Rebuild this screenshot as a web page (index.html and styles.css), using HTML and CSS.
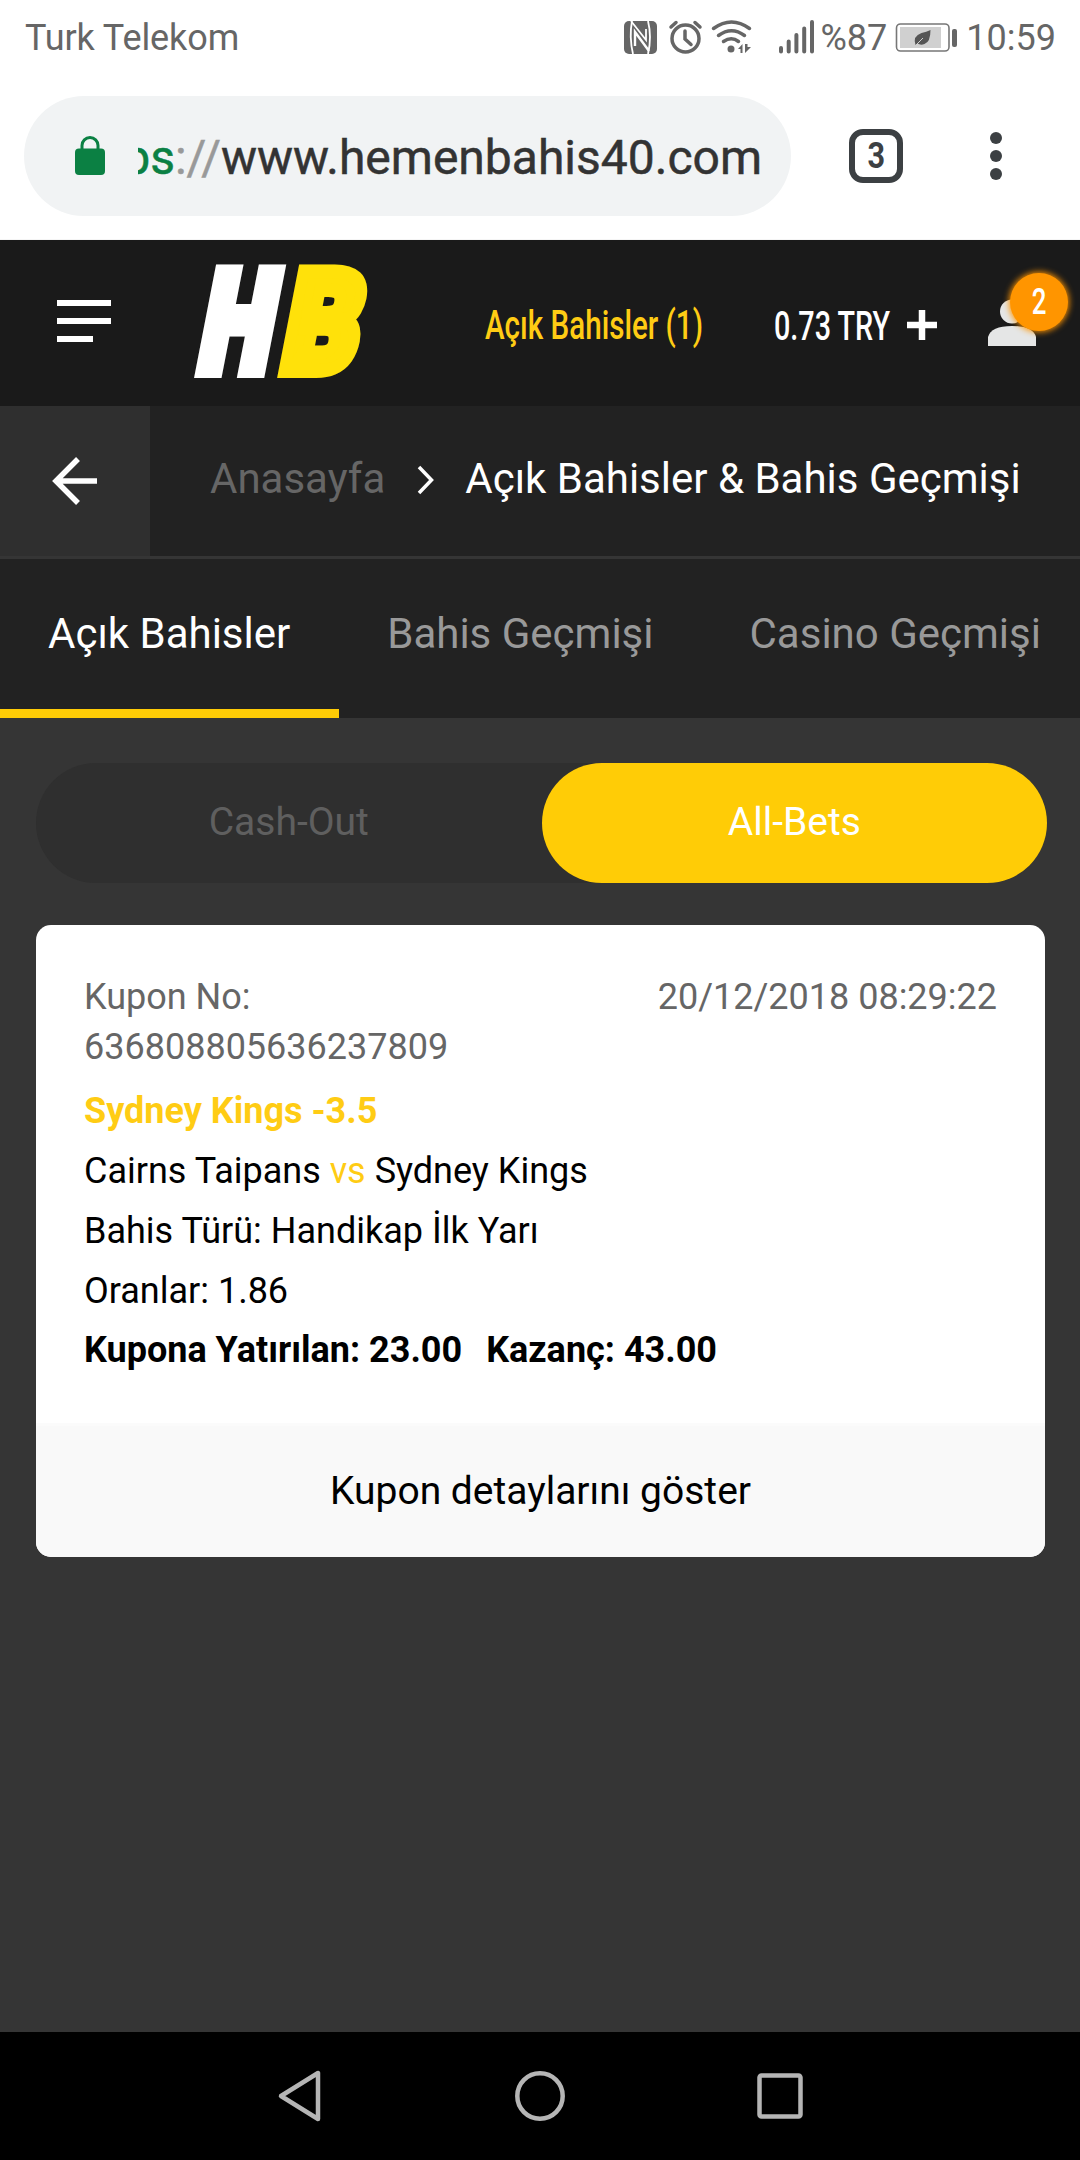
FILE: index.html
```html
<!DOCTYPE html>
<html lang="tr">
<head>
  <meta charset="UTF-8">
  <meta name="viewport" content="width=device-width, initial-scale=1.0">
  <title>Açık Bahisler &amp; Bahis Geçmişi</title>
  <link rel="stylesheet" href="styles.css">
</head>
<body>
  <div class="status-bar">
    <span class="carrier">Turk Telekom</span>
    <svg class="status-icons" width="194" height="40" viewBox="622 17 194 40">
      <!-- nfc -->
      <rect x="624" y="20" width="33" height="33" rx="5" fill="#666"/>
      <path d="M632 20q-3 16 1 33M648 20q4 16 0 33" fill="none" stroke="#fff" stroke-width="1.800"/>
      <path d="M631 20l15 19V28" fill="none" stroke="#fff" stroke-width="1.800"/>
      <path d="M635 45V31l14 19" fill="none" stroke="#fff" stroke-width="2.400"/>
      <!-- alarm -->
      <circle cx="685.500" cy="37.500" r="13.500" fill="none" stroke="#666" stroke-width="3.500"/>
      <path d="M685 30v8l6 5.500M671 26l5-4.500M700 26l-5-4.500" fill="none" stroke="#666" stroke-width="3.500" stroke-linecap="round"/>
      <!-- wifi -->
      <path d="M713.500 27.500q18-13 36 0M718.500 34.500q13-9.500 26 0M723.500 40.500q8-5.500 15 0" fill="none" stroke="#666" stroke-width="3.500" stroke-linecap="round"/>
      <circle cx="731" cy="48" r="3.500" fill="#666"/>
      <path d="M738 48l4.500-5v9h-2v-4zM745 43v9l6-6h-3.500v-3z" fill="#666"/>
      <!-- signal -->
      <path d="M781 47v3.500M788.700 40.500v10M796.400 34v16.500M804.200 27.500v23M812 21v29.500" stroke="#666" stroke-width="4" stroke-linecap="round"/>
    </svg>
    <span class="percent">%87</span>
    <svg class="battery" width="62" height="30" viewBox="896 22 62 30">
      <rect x="896.500" y="23" width="52.500" height="27" rx="4" fill="none" stroke="#777" stroke-width="1.600"/>
      <rect x="900" y="26" width="41" height="21" fill="#d0d0d0"/>
      <path d="M915.500 44q-3-9 6-12 5-1 9-3 0 12-6 14-4 1.500-7-.5z" fill="#555"/>
      <path d="M916 44l7-7" stroke="#d0d0d0" stroke-width="1"/>
      <rect x="952" y="28" width="5" height="18" rx="2" fill="#666"/>
    </svg>
    <span class="clock">10:59</span>
  </div>

  <div class="browser-bar">
    <div class="address">
      <svg class="lock" width="30" height="40" viewBox="0 0 30 40">
        <path d="M7 15V9.500a8 8 0 0 1 16 0V15" fill="none" stroke="#0b8043" stroke-width="3"/>
        <rect y="12.500" width="30" height="26.500" rx="4" fill="#0b8043"/>
      </svg>
      <div class="url"><span class="scheme">https</span><span class="slashes">://</span>www.hemenbahis40.com</div>
    </div>
    <div class="tab-count"><span>3</span></div>
    <div class="more"><i></i><i></i><i></i></div>
  </div>

  <header class="site-header">
    <div class="menu"><i></i><i></i><i></i></div>
    <svg class="logo" width="178" height="114" viewBox="0 0 178 114">
      <g font-family="Roboto" font-weight="900" font-size="140" stroke-width="14">
        <text transform="translate(2 107) skewX(-11)" textLength="71" lengthAdjust="spacingAndGlyphs" fill="#fff" stroke="#fff">H</text>
        <text transform="translate(85 107) skewX(-11)" textLength="75" lengthAdjust="spacingAndGlyphs" fill="#ffe10a" stroke="#ffe10a">B</text>
      </g>
    </svg>
    <svg class="open-bets" width="218" height="50" viewBox="0 0 218 50">
      <text x="0" y="39" textLength="218" lengthAdjust="spacingAndGlyphs">Açık Bahisler (1)</text>
    </svg>
    <svg class="balance" width="116" height="50" viewBox="0 0 116 50">
      <text x="0" y="40" textLength="116" lengthAdjust="spacingAndGlyphs">0.73 TRY</text>
    </svg>
    <svg class="plus" width="30" height="30" viewBox="0 0 30 30">
      <path d="M0 15h30M15 0v30" stroke="#fff" stroke-width="6.500"/>
    </svg>
    <div class="user">
      <svg width="48" height="48" viewBox="0 0 48 48">
        <circle cx="24" cy="12.500" r="12" fill="#e5e6e6"/>
        <path d="M0 47V38q3-11 24-11t24 11v9z" fill="#e5e6e6"/>
      </svg>
      <span class="badge"><span>2</span></span>
    </div>
  </header>

  <div class="breadcrumb">
    <div class="back">
      <svg width="46" height="50" viewBox="0 0 46 50">
        <path d="M26 3L4 25l22 22M4 25h41" fill="none" stroke="#fff" stroke-width="5.500"/>
      </svg>
    </div>
    <a class="crumb">Anasayfa</a>
    <svg class="chevron" width="18" height="30" viewBox="0 0 18 30">
      <path d="M2 2l12.500 13L2 28" fill="none" stroke="#fff" stroke-width="3.500"/>
    </svg>
    <span class="crumb-current">Açık Bahisler &amp; Bahis Geçmişi</span>
  </div>

  <nav class="tabs">
    <a class="tab active">Açık Bahisler</a>
    <a class="tab">Bahis Geçmişi</a>
    <a class="tab">Casino Geçmişi</a>
  </nav>

  <main class="content">
    <div class="switch">
      <div class="switch-item">Cash-Out</div>
      <div class="switch-item active">All-Bets</div>
    </div>

    <div class="coupon">
      <div class="coupon-body">
        <div class="coupon-head">
          <div class="coupon-no">Kupon No: 636808805636237809</div>
          <div>20/12/2018 08:29:22</div>
        </div>
        <div class="pick">Sydney Kings -3.5</div>
        <div>Cairns Taipans <span class="vs">vs</span> Sydney Kings</div>
        <div>Bahis Türü: Handikap İlk Yarı</div>
        <div>Oranlar: 1.86</div>
        <div class="totals"><span>Kupona Yatırılan: 23.00</span><span>Kazanç: 43.00</span></div>
      </div>
      <div class="coupon-footer">Kupon detaylarını göster</div>
    </div>
  </main>

  <div class="nav-bar">
    <svg width="46" height="54" viewBox="0 0 46 54">
      <path d="M41 4v46L4 27z" fill="none" stroke="#b5b5b5" stroke-width="4.500" stroke-linejoin="round"/>
    </svg>
    <svg width="50" height="50" viewBox="0 0 50 50">
      <circle cx="25" cy="25" r="22.700" fill="none" stroke="#b5b5b5" stroke-width="4.500"/>
    </svg>
    <svg width="46" height="46" viewBox="0 0 46 46">
      <rect x="2.500" y="2.500" width="41" height="41" rx="2" fill="none" stroke="#b5b5b5" stroke-width="4.500"/>
    </svg>
  </div>
</body>
</html>
```
FILE: styles.css
```css
* {
  box-sizing: border-box;
}
body {
  margin: 0;
  width: 1080px;
  height: 2160px;
  display: flex;
  flex-direction: column;
  font-family: Roboto, "Liberation Sans", sans-serif;
  font-size: 36px;
  background-color: #353535;
  overflow: hidden;
}
svg {
  display: block;
  flex: none;
  overflow: visible;
}

/* phone status bar */
.status-bar {
  height: 75px;
  padding: 0 24px 0 25px;
  display: flex;
  align-items: center;
  background-color: #fff;
  color: #666;
}
.carrier {
  letter-spacing: -0.1px;
}
.status-icons {
  margin-left: auto;
}
.percent {
  margin-left: 5px;
}
.battery {
  margin-left: 9px;
}
.clock {
  margin-left: 8px;
}

/* browser toolbar */
.browser-bar {
  height: 165px;
  padding: 21px 24px 24px;
  display: flex;
  align-items: center;
  background-color: #fff;
  border-bottom: 1px solid #f5f5f5;
}
.address {
  width: 767px;
  height: 120px;
  padding-left: 51px;
  display: flex;
  align-items: center;
  border-radius: 60px;
  background-color: #f1f3f4;
}
.url {
  width: 624px;
  margin: 3px 0 0 33px;
  display: flex;
  justify-content: flex-end;
  overflow: hidden;
  font-size: 48px;
  color: #333;
  -webkit-text-stroke: 0.5px currentColor;
  white-space: nowrap;
}
.scheme {
  color: #0b8043;
}
.slashes {
  color: #999;
}
.tab-count {
  width: 54px;
  height: 54px;
  margin-left: 58px;
  display: flex;
  align-items: center;
  justify-content: center;
  border: 6px solid #3c4043;
  border-radius: 14px;
  color: #3c4043;
  font-weight: bold;
}
.tab-count span {
  transform: scaleX(0.85);
}
.more {
  margin-left: 87px;
  display: grid;
  gap: 6px;
}
.more i {
  width: 12px;
  height: 12px;
  border-radius: 50%;
  background-color: #3c4043;
}

/* site header */
.site-header {
  height: 166px;
  padding-left: 57px;
  display: flex;
  align-items: flex-start;
  background-color: #1a1a1a;
}
.menu {
  width: 54px;
  margin-top: 60px;
  display: grid;
  gap: 12px;
}
.menu i {
  height: 6px;
  background-color: #fff;
}
.menu i:last-child {
  width: 36px;
}
.logo {
  margin: 24px 0 0 82px;
}
.open-bets {
  margin: 60px 0 0 114px;
  font-size: 40px;
  font-weight: 500;
  fill: #ffcc14;
}
.balance {
  margin: 60px 0 0 71px;
  font-size: 40px;
  font-weight: 500;
  fill: #fff;
}
.plus {
  margin: 70px 0 0 17px;
}
.user {
  position: relative;
  margin: 59px 0 0 51px;
}
.badge {
  position: absolute;
  left: 22px;
  top: -26px;
  width: 58px;
  height: 58px;
  display: flex;
  align-items: center;
  justify-content: center;
  border-radius: 50%;
  background-color: #ff9500;
  box-shadow: 0 0 6px 1px #ff9500;
  color: #fff;
  font-weight: 500;
}
.badge span {
  transform: scaleX(0.72);
}

/* breadcrumb */
.breadcrumb {
  height: 153px;
  display: flex;
  align-items: center;
  background-color: #222;
  border-bottom: 3px solid #353535;
  font-size: 42px;
  color: #fff;
}
.back {
  width: 150px;
  height: 150px;
  padding: 50px 0 0 52px;
  background-color: #2f2f2f;
}
.crumb {
  margin: 0 32px 5px 60px;
  color: #666;
}
.chevron {
  margin-bottom: 2px;
}
.crumb-current {
  margin: 0 0 5px 30px;
  white-space: nowrap;
}

/* tabs */
.tabs {
  height: 159px;
  display: flex;
  background-color: #222;
  font-size: 42px;
}
.tab {
  padding: 0 48px;
  line-height: 150px;
  color: #999;
  white-space: nowrap;
}
.tab.active {
  padding-right: 49px;
  color: #fff;
  border-bottom: 9px solid #ffcc06;
}

/* content */
.content {
  flex: 1;
  padding: 45px 33px 0 36px;
}
.switch {
  display: flex;
  border-radius: 60px;
  background-color: #2f2f2f;
  font-size: 39px;
}
.switch-item {
  flex: 1;
  height: 120px;
  line-height: 119px;
  text-align: center;
  color: #5f5f5f;
}
.switch-item.active {
  border-radius: 60px;
  background-color: #ffcc06;
  color: #fff;
}
.coupon {
  width: 1009px;
  margin-top: 42px;
  border-radius: 15px;
  background-color: #fff;
  overflow: hidden;
}
.coupon-body {
  height: 498px;
  padding: 47px 48px 0;
  line-height: 60px;
  color: #000;
}
.coupon-head {
  margin-bottom: 9px;
  display: flex;
  justify-content: space-between;
  line-height: 50px;
  color: #666;
}
.coupon-no {
  width: 400px;
}
.pick {
  font-weight: bold;
  color: #ffcc14;
}
.vs {
  color: #ffcc14;
}
.totals {
  display: flex;
  gap: 24px;
  line-height: 59px;
  font-weight: bold;
}
.coupon-footer {
  height: 134px;
  border-top: 3px solid #fbfbfb;
  background-color: #f9f9f9;
  line-height: 130px;
  text-align: center;
  font-size: 39px;
  color: #000;
}

/* android navigation */
.nav-bar {
  height: 128px;
  padding: 0 277px;
  display: flex;
  align-items: center;
  justify-content: space-between;
  background-color: #000;
}
```
